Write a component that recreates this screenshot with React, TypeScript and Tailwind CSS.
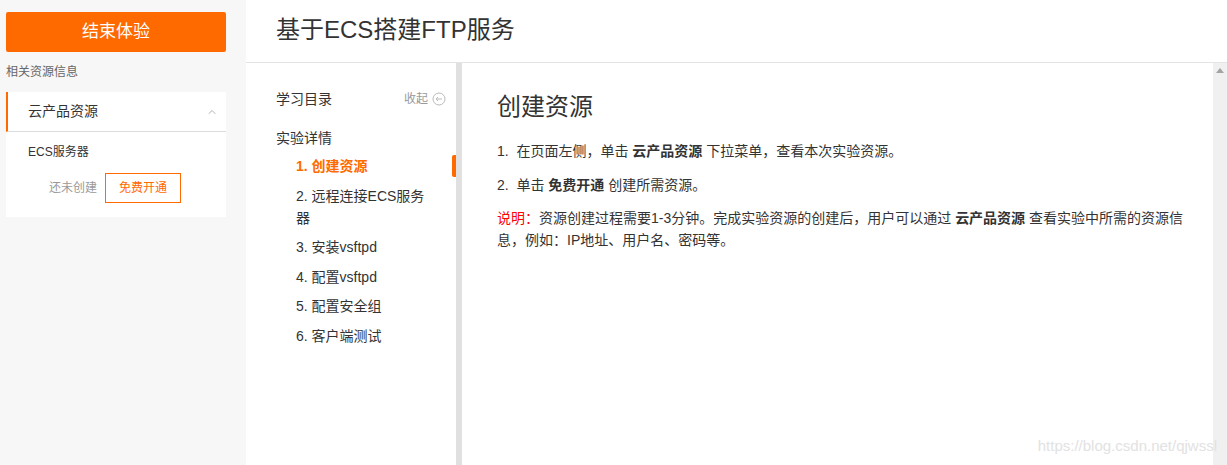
import { ChevronUp } from 'lucide-react';

const font = { fontFamily: '"Liberation Sans", "Noto Sans CJK SC", sans-serif' };

const steps = [
  { label: '1. 创建资源', active: true },
  { label: '2. 远程连接ECS服务器' },
  { label: '3. 安装vsftpd' },
  { label: '4. 配置vsftpd' },
  { label: '5. 配置安全组' },
  { label: '6. 客户端测试' },
];

function Sidebar() {
  return (
    <aside className="w-[246px] shrink-0 bg-[#f7f7f7] px-[6px] pt-[12px]">
      <button
        type="button"
        className="w-[220px] h-[40px] rounded-[2px] bg-[#ff6a00] text-white text-[17px]"
      >
        结束体验
      </button>
      <p className="mt-[12px] text-[12px] leading-[16px] text-[#666]">相关资源信息</p>
      <div className="mt-[12px] w-[220px] bg-white">
        <div className="flex h-[40px] items-center justify-between border-l-2 border-[#ff6a00] border-b border-b-[#ddd] pl-[20px] pr-[8px]">
          <span className="text-[14px] text-[#333]">云产品资源</span>
          <ChevronUp size={12} strokeWidth={1.5} className="text-[#999]" />
        </div>
        <div className="px-[22px] pt-[12px] pb-[14px]">
          <p className="text-[12px] leading-[16px] text-[#333]">ECS服务器</p>
          <div className="mt-[13px] flex items-center gap-[8px] pl-[21px]">
            <span className="text-[12px] text-[#999]">还未创建</span>
            <button
              type="button"
              className="h-[30px] w-[76px] border border-[#ff6a00] text-[12px] text-[#ff6a00]"
            >
              免费开通
            </button>
          </div>
        </div>
      </div>
    </aside>
  );
}

function Toc() {
  return (
    <nav className="w-[210px] shrink-0 pl-[30px] pr-[10px] pt-[26px] relative">
      <div className="flex items-center justify-between">
        <span className="text-[14px] leading-[20px] text-[#333]">学习目录</span>
        <span className="flex items-center gap-[4px] text-[12px] text-[#999]">
          收起
          <svg width="14" height="14" viewBox="0 0 14 14" fill="none" stroke="#bbb" strokeWidth="1">
            <circle cx="7" cy="7" r="6" />
            <path d="M4 7h6M6 5l-2 2 2 2" />
          </svg>
        </span>
      </div>
      <p className="mt-[19px] text-[14px] leading-[20px] text-[#333]">实验详情</p>
      <ul className="mt-[7px] pl-[20px] space-y-[7.5px]">
        {steps.map((s) => (
          <li
            key={s.label}
            className={
              s.active
                ? 'w-[136px] text-[14px] leading-[22px] font-bold text-[#ff6a00]'
                : 'w-[136px] text-[14px] leading-[22px] text-[#333]'
            }
          >
            {s.label}
          </li>
        ))}
      </ul>
      <span className="absolute right-0 top-[92px] h-[22px] w-[4px] rounded-l-[2px] bg-[#ff6a00]" />
    </nav>
  );
}

function Content() {
  return (
    <article className="flex-1 pl-[35px] pr-[28px] pt-[28px] text-[14px] text-[#333]">
      <h2 className="text-[24px] leading-[32px] text-[#333]">创建资源</h2>
      <p className="mt-[17px] leading-[22px]">
        1.&nbsp; 在页面左侧，单击 <b>云产品资源</b> 下拉菜单，查看本次实验资源。
      </p>
      <p className="mt-[12px] leading-[22px]">
        2.&nbsp; 单击 <b>免费开通</b> 创建所需资源。
      </p>
      <p className="mt-[11px] leading-[22px]">
        <span className="text-[#f00]">说明：</span>资源创建过程需要1-3分钟。完成实验资源的创建后，用户可以通过 <b>云产品资源</b> 查看实验中所需的资源信息，例如：IP地址、用户名、密码等。
      </p>
    </article>
  );
}

export default function App() {
  return (
    <div className="relative flex h-[465px] w-[1227px] overflow-hidden bg-white" style={font}>
      <Sidebar />
      <main className="flex flex-1 flex-col">
        <header className="flex h-[63px] shrink-0 items-center border-b border-[#e4e4e4] pl-[30px]">
          <h1 className="-mt-[3px] text-[24px] text-[#333]">基于ECS搭建FTP服务</h1>
        </header>
        <div className="flex flex-1">
          <Toc />
          <div className="w-[6px] shrink-0 bg-[#e0e0e0]" />
          <Content />
          <div className="w-[14px] shrink-0 bg-[#f0f0f0] flex justify-center pt-[5px]">
            <svg width="8" height="5" viewBox="0 0 8 5">
              <path d="M0 5L4 0l4 5z" fill="#a3a3a3" />
            </svg>
          </div>
        </div>
      </main>
      <span className="absolute right-[10px] bottom-[8px] text-[15px] text-[#e2e2e2]">
        https://blog.csdn.net/qjwssl
      </span>
    </div>
  );
}
